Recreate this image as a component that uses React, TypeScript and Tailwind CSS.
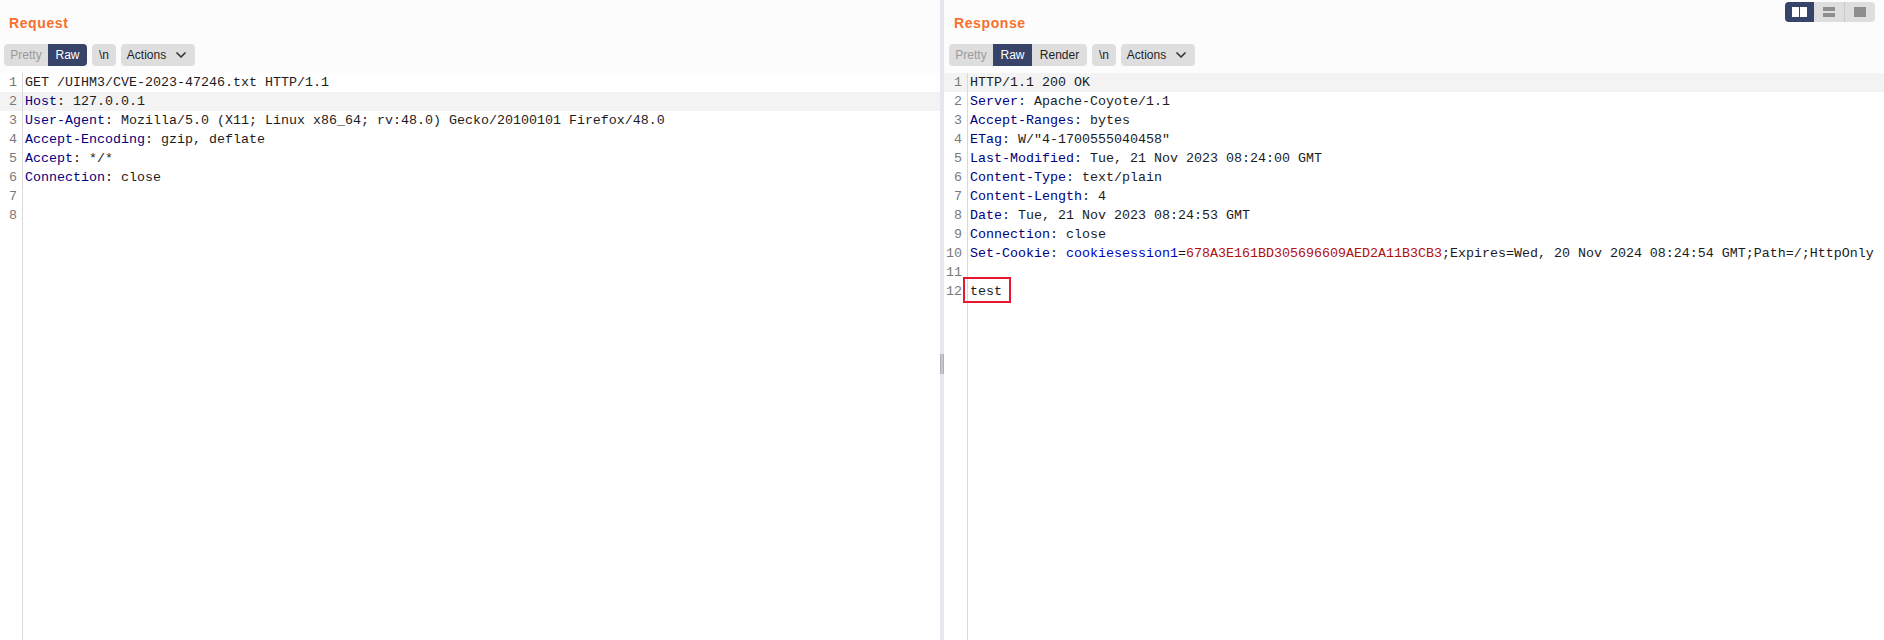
import { ReactNode } from "react";
import { ChevronDown } from "lucide-react";

const MONO = "font-['Liberation_Mono',monospace] text-[13.33px] leading-[19px]";

// segments of a line of the message editor
function Name({ children }: { children: ReactNode }) {
    return <span className="text-[#000080]">{children}</span>;
}

function Line({ num, gutter, active, children }: { num: number; gutter: string; active?: boolean; children?: ReactNode }) {
    return (
        <div className={`flex h-[19px] ${MONO} ${active ? "bg-[#f3f3f3]" : ""}`}>
            <div className={`${gutter} shrink-0 pr-[5px] text-right text-[#7a7a7a] border-r border-[#d9d9d9]`}>{num}</div>
            <div className="pl-[2px] whitespace-pre text-[#1c1c1c]">{children}</div>
        </div>
    );
}

function Toolbar({ render }: { render?: boolean }) {
    const font = "font-['Liberation_Sans',sans-serif] text-[12px]";
    return (
        <div className={`flex items-center gap-[5px] h-[22px] ${font} text-[#1f1f1f]`}>
            <div className="flex h-full rounded-[4px] bg-[#dedede] overflow-hidden">
                <div className="w-[44px] flex items-center justify-center text-[#9a9a9a]">Pretty</div>
                <div className="w-[39px] flex items-center justify-center bg-[#374368] text-white">Raw</div>
                {render && <div className="w-[55px] flex items-center justify-center">Render</div>}
            </div>
            <div className="w-[24px] flex h-full items-center justify-center rounded-[4px] bg-[#dedede]">\n</div>
            <div className="w-[74px] flex h-full items-center justify-center gap-[7px] rounded-[4px] bg-[#dedede]">
                Actions
                <ChevronDown size={16} strokeWidth={2.5} className="text-[#333]" />
            </div>
        </div>
    );
}

function PaneHeader({ title, pl, render }: { title: string; pl: string; render?: boolean }) {
    return (
        <div className="h-[73px] shrink-0 bg-[#fcfcfc]">
            <div className={`h-[44px] pt-[14px] ${pl} font-['Liberation_Sans',sans-serif] text-[14px] leading-[18px] tracking-[0.6px] font-bold text-[#f5702c]`}>
                {title}
            </div>
            <div className={render ? "pl-[5px]" : "pl-[4px]"}>
                <Toolbar render={render} />
            </div>
        </div>
    );
}

export default function App() {
    return (
        <div className="flex h-[640px] w-[1884px] bg-white overflow-hidden relative">
            {/* Request */}
            <div className="w-[940px] shrink-0 flex flex-col">
                <PaneHeader title="Request" pl="pl-[9px]" />
                <div className="flex-1 relative">
                    <Line num={1} gutter="w-[23px]">GET /UIHM3/CVE-2023-47246.txt HTTP/1.1</Line>
                    <Line num={2} gutter="w-[23px]" active><Name>Host</Name>: 127.0.0.1</Line>
                    <Line num={3} gutter="w-[23px]"><Name>User-Agent</Name>: Mozilla/5.0 (X11; Linux x86_64; rv:48.0) Gecko/20100101 Firefox/48.0</Line>
                    <Line num={4} gutter="w-[23px]"><Name>Accept-Encoding</Name>: gzip, deflate</Line>
                    <Line num={5} gutter="w-[23px]"><Name>Accept</Name>: */*</Line>
                    <Line num={6} gutter="w-[23px]"><Name>Connection</Name>: close</Line>
                    <Line num={7} gutter="w-[23px]" />
                    <Line num={8} gutter="w-[23px]" />
                    <div className="absolute left-[22px] top-[152px] bottom-0 w-px bg-[#d9d9d9]" />
                </div>
            </div>

            {/* Divider */}
            <div className="w-[4px] shrink-0 bg-[#e4e7ec] flex items-center">
                <div className="w-full h-[20px] mt-[87px] bg-[#c3c6cd] border-x border-[#aeb1b8]" />
            </div>

            {/* Response */}
            <div className="flex-1 flex flex-col">
                <PaneHeader title="Response" pl="pl-[10px]" render />
                <div className="flex-1 relative">
                    <Line num={1} gutter="w-[24px]" active>HTTP/1.1 200 OK</Line>
                    <Line num={2} gutter="w-[24px]"><Name>Server</Name>: Apache-Coyote/1.1</Line>
                    <Line num={3} gutter="w-[24px]"><Name>Accept-Ranges</Name>: bytes</Line>
                    <Line num={4} gutter="w-[24px]"><Name>ETag</Name>: W/"4-1700555040458"</Line>
                    <Line num={5} gutter="w-[24px]"><Name>Last-Modified</Name>: Tue, 21 Nov 2023 08:24:00 GMT</Line>
                    <Line num={6} gutter="w-[24px]"><Name>Content-Type</Name>: text/plain</Line>
                    <Line num={7} gutter="w-[24px]"><Name>Content-Length</Name>: 4</Line>
                    <Line num={8} gutter="w-[24px]"><Name>Date</Name>: Tue, 21 Nov 2023 08:24:53 GMT</Line>
                    <Line num={9} gutter="w-[24px]"><Name>Connection</Name>: close</Line>
                    <Line num={10} gutter="w-[24px]">
                        <Name>Set-Cookie</Name>: <span className="text-[#0000c8]">cookiesession1</span>=<span className="text-[#b01010]">678A3E161BD305696609AED2A11B3CB3</span>;Expires=Wed, 20 Nov 2024 08:24:54 GMT;Path=/;HttpOnly
                    </Line>
                    <Line num={11} gutter="w-[24px]" />
                    <Line num={12} gutter="w-[24px]">test</Line>
                    <div className="absolute left-[23px] top-[228px] bottom-0 w-px bg-[#d9d9d9]" />
                    {/* red annotation box */}
                    <div className="absolute left-[19px] top-[204px] w-[48px] h-[26px] border-2 border-[#e8192c]" />
                </div>
            </div>

            {/* Layout switch */}
            <div className="absolute left-[1785px] top-[2px] flex h-[20px] w-[90px] rounded-[4px] bg-[#dedede] overflow-hidden">
                <div className="w-[29px] flex items-center justify-center gap-[1px] bg-[#374368]">
                    <div className="w-[7px] h-[10px] bg-white" />
                    <div className="w-[7px] h-[10px] bg-white" />
                </div>
                <div className="w-[31px] flex flex-col items-center justify-center gap-[2px] border-r border-[#cbcbcb]">
                    <div className="w-[12px] h-[4px] bg-[#8e8e8e]" />
                    <div className="w-[12px] h-[4px] bg-[#8e8e8e]" />
                </div>
                <div className="flex-1 flex items-center justify-center">
                    <div className="w-[12px] h-[10px] bg-[#8e8e8e]" />
                </div>
            </div>
        </div>
    );
}
